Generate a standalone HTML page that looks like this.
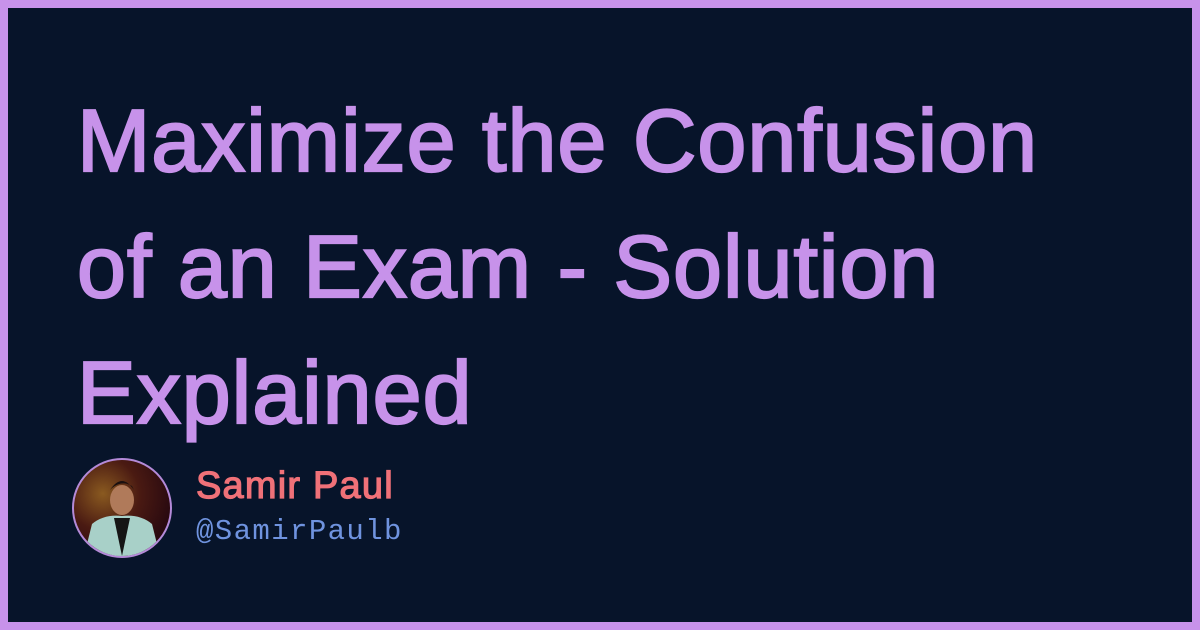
<!DOCTYPE html>
<html><head><style>
html,body{margin:0;padding:0}
body{width:1200px;height:630px;background:#c792ea;position:relative;overflow:hidden}
.in{position:absolute;left:8px;top:8px;width:1184px;height:614px;background:#07142a}
h1{position:absolute;left:77px;top:78px;margin:0;font:88px/126px "Liberation Sans",sans-serif;color:#c792ea;-webkit-text-stroke:2.2px #c792ea;letter-spacing:1px;width:1100px}
.av{position:absolute;left:72px;top:458px;width:96px;height:96px;border-radius:50%;border:2px solid #b48ad8;overflow:hidden;background:radial-gradient(circle at 30% 35%,#8a5a20 0,#4a1a12 40%,#2a0a10 75%)}
.name{position:absolute;left:196px;top:465px;font:38px "Liberation Sans",sans-serif;color:#f07178;-webkit-text-stroke:1.2px #f07178;letter-spacing:1.2px}
.h{position:absolute;left:196px;top:515px;font:29px "Liberation Mono",monospace;color:#82aaff;opacity:.85;letter-spacing:1.4px}
</style></head><body><div class="in"></div>
<h1>Maximize the Confusion<br>of an Exam - Solution<br>Explained</h1>
<div class="av"><svg width="96" height="96"><ellipse cx="48" cy="40" rx="12" ry="15" fill="#b07a5a"/><path d="M36 30 Q48 12 60 30 L58 26 Q48 20 38 28Z" fill="#1a1010"/><path d="M10 96 L18 64 Q30 54 48 56 Q66 54 78 64 L86 96Z" fill="#a8d0c8"/><path d="M40 58 L48 96 L56 58Z" fill="#151515"/></svg></div>
<div class="name">Samir Paul</div>
<div class="h">@SamirPaulb</div>
</body></html>
